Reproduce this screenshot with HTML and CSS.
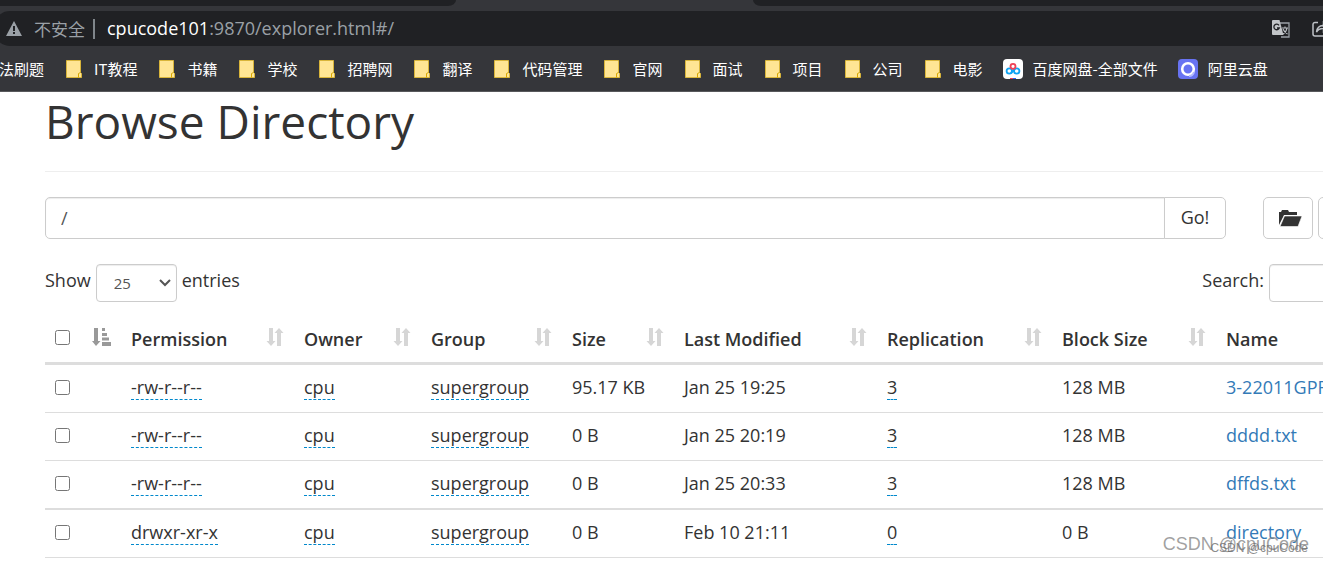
FILE: index.html
```html
<!DOCTYPE html>
<html lang="en">
<head>
<meta charset="utf-8">
<title>Browsing HDFS</title>
<link rel="stylesheet" href="styles.css">
</head>
<body>
<svg class="sprite" aria-hidden="true">
  <symbol id="folder" viewBox="0 0 16 18">
    <path d="M.5.5h14v12l1 1v4H.5z" fill="#ffe594" stroke="#d9b53a"/>
    <path d="M12.5 17.500v-4l2-1" fill="none" stroke="#d9a800"/>
  </symbol>
  <symbol id="sort" viewBox="0 0 18 18">
    <path d="M3 0h4v13h2.500L5 18 .5 13H3zM11 18V5H8.500L13 0l4.500 5H15v13z" fill="currentColor"/>
  </symbol>
  <symbol id="sort-active" viewBox="0 0 19 18">
    <path d="M2 0h4v13h2.500L4 18 0 13h2zM10 0h3v3h-3zM10 5h5v3h-5zM10 9.500h7v3h-7zM10 14h9v4h-9z" fill="currentColor"/>
  </symbol>
</svg>

<header class="browser">
  <div class="tabs"><span class="tab tab-left"></span><span class="tab tab-right"></span></div>
  <div class="address">
    <svg class="warn" viewBox="0 0 16 15"><path d="M8 0l8 15H0z" fill="#9aa0a6"/><path d="M7 5h2v5H7zM7 11h2v2H7z" fill="#202124"/></svg>
    <span class="insecure">不安全</span>
    <span class="divider"></span>
    <span class="url"><b>cpucode101</b>:9870/explorer.html#/</span>
    <svg class="translate" viewBox="0 0 18 18">
      <path d="M8 3h9v14H9" fill="none" stroke="#9aa0a6" stroke-width="1.300"/>
      <path d="M1 0h6.500l4 15H1a1 1 0 0 1-1-1V1a1 1 0 0 1 1-1z" fill="#c2c5c8"/>
      <path d="M7 5.300A2.800 2.800 0 1 0 7.300 8H5" fill="none" stroke="#202124" stroke-width="1.300"/>
      <path d="M10 8h6M13 6.500V8M15 8c-.5 3-2 5-4 6M11 9c1 2.500 2.500 4 4.500 5" fill="none" stroke="#bdc1c6" stroke-width="1.100"/>
    </svg>
    <svg class="share" viewBox="0 0 18 16"><path d="M6 1.500H3a2 2 0 0 0-2 2V13a2 2 0 0 0 2 2h11a2 2 0 0 0 2-2v-2M4.500 11C5 7 7.500 4.500 11.500 4.500V1.500L17 6l-5.500 4.500v-3C8 7.500 6 8.500 4.500 11z" fill="none" stroke="#bdc1c6" stroke-width="1.500"/></svg>
  </div>
  <nav class="bookmarks">
    <span>法刷题</span>
    <span><svg><use href="#folder"/></svg>IT教程</span>
    <span><svg><use href="#folder"/></svg>书籍</span>
    <span><svg><use href="#folder"/></svg>学校</span>
    <span><svg><use href="#folder"/></svg>招聘网</span>
    <span><svg><use href="#folder"/></svg>翻译</span>
    <span><svg><use href="#folder"/></svg>代码管理</span>
    <span><svg><use href="#folder"/></svg>官网</span>
    <span><svg><use href="#folder"/></svg>面试</span>
    <span><svg><use href="#folder"/></svg>项目</span>
    <span><svg><use href="#folder"/></svg>公司</span>
    <span><svg><use href="#folder"/></svg>电影</span>
    <span><svg class="site" viewBox="0 0 20 20"><rect width="20" height="20" rx="4" fill="#fff"/><circle cx="6.300" cy="12" r="2.700" fill="none" stroke="#12a5f4" stroke-width="1.800"/><circle cx="13.700" cy="12" r="2.700" fill="none" stroke="#12a5f4" stroke-width="1.800"/><path d="M8 14l4-4" stroke="#12a5f4" stroke-width="1.800"/><circle cx="10" cy="7.300" r="2.500" fill="none" stroke="#ef4056" stroke-width="1.800"/><path d="M7 19h3v1H7z" fill="#ef4056"/><path d="M10 19h3v1h-3z" fill="#2468f2"/></svg>百度网盘-全部文件</span>
    <span><svg class="site" viewBox="0 0 20 20"><rect width="20" height="20" rx="4" fill="#6873f2"/><circle cx="10" cy="10" r="5.800" fill="none" stroke="#fff" stroke-width="2.600"/><path d="M11 17q4 0 5-4" fill="none" stroke="#b3baff" stroke-width="2"/></svg>阿里云盘</span>
  </nav>
</header>

<main class="page">
  <h1>Browse Directory</h1>
  <div class="path-row">
    <form class="path-group">
      <input type="text" value="/" aria-label="Directory path">
      <button type="button">Go!</button>
    </form>
    <div class="tools">
      <button type="button" aria-label="Create directory"><svg viewBox="0 0 23 18"><path d="M0 16V3h2l1-2h6l1 2h8v3H5z" fill="#333"/><path d="M5.500 7H23l-4 10.500H1z" fill="#333" stroke="#fff" stroke-width=".6"/></svg></button>
      <button type="button" aria-label="Upload files"></button>
    </div>
  </div>
  <div class="controls">
    <label>Show <select><option>25</option></select> entries</label>
    <label>Search: <input type="search"></label>
  </div>
  <table class="files">
    <colgroup><col class="c-check"><col class="c-perm"><col class="c-owner"><col class="c-group"><col class="c-size"><col class="c-date"><col class="c-repl"><col class="c-block"><col></colgroup>
    <thead>
      <tr>
        <th><div><input type="checkbox" aria-label="Select all"><svg class="active"><use href="#sort-active"/></svg></div></th>
        <th><div>Permission<svg><use href="#sort"/></svg></div></th>
        <th><div>Owner<svg><use href="#sort"/></svg></div></th>
        <th><div>Group<svg><use href="#sort"/></svg></div></th>
        <th><div>Size<svg><use href="#sort"/></svg></div></th>
        <th><div>Last Modified<svg><use href="#sort"/></svg></div></th>
        <th><div>Replication<svg><use href="#sort"/></svg></div></th>
        <th><div>Block Size<svg><use href="#sort"/></svg></div></th>
        <th><div>Name</div></th>
      </tr>
    </thead>
    <tbody>
      <tr><td><input type="checkbox" aria-label="Select 3-22011GPF"></td><td><span class="edit">-rw-r--r--</span></td><td><span class="edit">cpu</span></td><td><span class="edit">supergroup</span></td><td>95.17 KB</td><td>Jan 25 19:25</td><td><span class="edit">3</span></td><td>128 MB</td><td><a href="#">3-22011GPF</a></td></tr>
      <tr><td><input type="checkbox" aria-label="Select dddd.txt"></td><td><span class="edit">-rw-r--r--</span></td><td><span class="edit">cpu</span></td><td><span class="edit">supergroup</span></td><td>0 B</td><td>Jan 25 20:19</td><td><span class="edit">3</span></td><td>128 MB</td><td><a href="#">dddd.txt</a></td></tr>
      <tr><td><input type="checkbox" aria-label="Select dffds.txt"></td><td><span class="edit">-rw-r--r--</span></td><td><span class="edit">cpu</span></td><td><span class="edit">supergroup</span></td><td>0 B</td><td>Jan 25 20:33</td><td><span class="edit">3</span></td><td>128 MB</td><td><a href="#">dffds.txt</a></td></tr>
      <tr><td><input type="checkbox" aria-label="Select directory"></td><td><span class="edit">drwxr-xr-x</span></td><td><span class="edit">cpu</span></td><td><span class="edit">supergroup</span></td><td>0 B</td><td>Feb 10 21:11</td><td><span class="edit">0</span></td><td>0 B</td><td><a href="#">directory</a></td></tr>
    </tbody>
  </table>
  <span class="mark mark-large">CSDN @cpuCode</span>
  <span class="mark mark-small">CSDN @cpuCode</span>
</main>
</body>
</html>
```
FILE: styles.css
```css
* { box-sizing: border-box; }
body {
  margin: 0;
  overflow: hidden;
  background: #fff;
  color: #333;
  font: 18px/26px "Open Sans", "Noto Sans CJK SC", sans-serif;
}
input, button, select { font: inherit; color: inherit; }
.sprite { display: none; }

.browser {
  background: #35363a;
  border-bottom: 1px solid #58595c;
  color: #fff;
  overflow: hidden;
}
.tabs { display: flex; justify-content: space-between; height: 6px; }
.tab { background: #202124; }
.tab-left { width: 456px; border-bottom-right-radius: 8px 6px; }
.tab-right { width: 570px; border-bottom-left-radius: 8px 6px; }
.address {
  display: flex;
  align-items: center;
  height: 35px;
  margin: 5px -12px 0 -6px;
  padding-left: 12px;
  background: #202124;
  border-radius: 16px 0 0 16px;
  color: #9aa0a6;
}
.warn { width: 16px; height: 15px; margin-right: 12px; }
.insecure { font: 17px/26px "Noto Sans CJK SC", sans-serif; }
.divider { width: 2px; height: 20px; margin: 0 12px 0 8px; background: #80868b; }
.url { line-height: 24px; padding-bottom: 2px; }
.url b { color: #fff; font-weight: 500; }
.translate { width: 18px; height: 18px; margin: 0 22px 0 auto; }
.share { width: 18px; height: 16px; margin-right: 5px; }
.bookmarks {
  display: flex;
  gap: 20px;
  height: 45px;
  margin-left: -1px;
  font: 15px/20px "Noto Sans CJK SC", sans-serif;
  white-space: nowrap;
}
.bookmarks span { display: flex; align-items: center; gap: 10px; }
.bookmarks svg { width: 20px; height: 18px; }
.bookmarks .site { height: 20px; }

.page { position: relative; padding-left: 45px; overflow: hidden; }
h1 {
  margin: 0 0 25px;
  padding-bottom: 20px;
  border-bottom: 1px solid #eee;
  font-size: 46px;
  line-height: 59px;
  font-weight: 400;
}
.path-row { display: flex; gap: 37px; margin-right: -45px; }
.path-group { display: flex; flex: 1; height: 42px; }
.path-group input {
  flex: 1;
  min-width: 0;
  padding: 0 15px;
  border: 1px solid #ccc;
  border-radius: 5px 0 0 5px;
  box-shadow: inset 0 1px 1px #00000013;
  color: #555;
}
.path-group button {
  width: 62px;
  margin-left: -1px;
  padding: 0 0 2px;
  background: #fff;
  border: 1px solid #ccc;
  border-radius: 0 5px 5px 0;
}
.tools { display: flex; gap: 5px; }
.tools button {
  width: 50px;
  padding: 0 0 0 4px;
  background: #fff;
  border: 1px solid #ccc;
  border-radius: 5px;
}
.tools svg { display: block; width: 23px; height: 18px; margin: auto; }
.controls {
  display: flex;
  justify-content: space-between;
  margin: 25px -146px 0 0;
}
.controls label { display: flex; gap: 5px; line-height: 32px; }
.controls select, .controls input {
  height: 38px;
  background: #fff;
  border: 1px solid #ccc;
  border-radius: 4px;
  box-shadow: inset 0 1px 1px #00000013;
  color: #555;
  font-size: 15px;
}
.controls select {
  appearance: none;
  width: 81px;
  padding: 0 0 0 17px;
  background: #fff url("data:image/svg+xml,%3Csvg xmlns='http://www.w3.org/2000/svg' width='12' height='8'%3E%3Cpath d='M1 1l5 5 5-5' fill='none' stroke='%23555' stroke-width='2'/%3E%3C/svg%3E") no-repeat right 5px center;
}
.controls input { width: 200px; }

.files {
  width: calc(100% + 146px);
  table-layout: fixed;
  border-collapse: separate;
  border-spacing: 0;
}
.c-check { width: 76px; }
.c-perm { width: 173px; }
.c-owner { width: 127px; }
.c-group { width: 141px; }
.c-size { width: 112px; }
.c-date { width: 203px; }
.c-repl { width: 175px; }
.c-block { width: 164px; }
.files th, .files td { padding: 0 10px; text-align: left; white-space: nowrap; }
.files th { height: 63px; padding-top: 13px; border-bottom: 3px solid #ddd; font-weight: 600; }
.files th div { display: flex; justify-content: space-between; align-items: center; }
.files th svg { width: 18px; height: 18px; margin-bottom: 4px; color: #d6d6d6; }
.files th .active { width: 19px; color: #999; }
.files td { height: 48px; padding-bottom: 4px; border-bottom: 1px solid #ddd; }
.files tr:nth-child(3) td { height: 49px; border-bottom-width: 2px; }
.files input { display: block; width: 15px; height: 15px; margin: 0; }
.files td input { margin-top: 2px; }
.files th input { margin-bottom: 3px; }
.edit { display: inline-block; line-height: 24px; border-bottom: 1px dashed #08c; }
a { color: #337ab7; text-decoration: none; }

.mark { position: absolute; font-family: "Liberation Sans", sans-serif; white-space: nowrap; }
.mark-large { right: 14px; bottom: 1px; color: #8c8c8cd0; font-size: 18px; }
.mark-small { right: 15px; bottom: 0; color: #666666c0; font-size: 12px; line-height: 20px; }
```
